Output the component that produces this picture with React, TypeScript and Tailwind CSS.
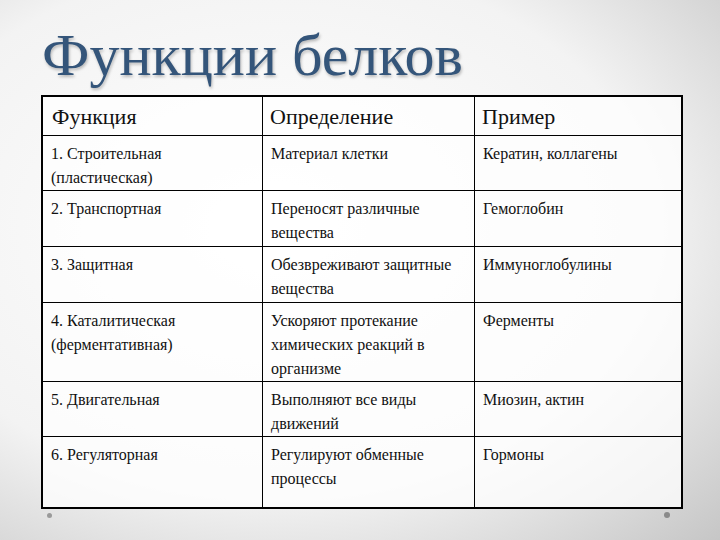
const SERIF = { fontFamily: "'Liberation Serif', 'Times New Roman', serif" };

const ROWS = [
  {
    fn: "1. Строительная (пластическая)",
    def: "Материал клетки",
    ex: "Кератин, коллагены",
    h: "h-[55px]",
  },
  {
    fn: "2. Транспортная",
    def: "Переносят различные вещества",
    ex: "Гемоглобин",
    h: "h-[56px]",
  },
  {
    fn: "3. Защитная",
    def: "Обезвреживают защитные вещества",
    ex: "Иммуноглобулины",
    h: "h-[56px]",
  },
  {
    fn: "4. Каталитическая (ферментативная)",
    def: "Ускоряют протекание химических реакций в организме",
    ex: "Ферменты",
    h: "h-[79px]",
  },
  {
    fn: "5. Двигательная",
    def: "Выполняют все виды движений",
    ex: "Миозин, актин",
    h: "h-[55px]",
  },
  {
    fn: "6. Регуляторная",
    def: "Регулируют обменные процессы",
    ex: "Гормоны",
    h: "h-[70px]",
  },
];

function Cell({ children, last }: { children: React.ReactNode; last?: boolean }) {
  return (
    <div
      style={SERIF}
      className={
        last
          ? "px-[8px] pt-[6px] text-[16px] leading-[24px] text-[#111]"
          : "border-r border-black px-[8px] pt-[6px] text-[16px] leading-[24px] text-[#111]"
      }
    >
      {children}
    </div>
  );
}

export default function App() {
  return (
    <div
      style={SERIF}
      className="relative h-[540px] w-[720px] overflow-hidden bg-radial-[ellipse_at_38%_42%] from-white via-[#f3f3f3] via-60% to-[#c6c6c6]"
    >
      <h1
        style={SERIF}
        className="pl-[42px] pt-[20px] text-[60px] leading-[70px] text-[#34557a] [text-shadow:1px_2px_3px_#00000040]"
      >
        Функции белков
      </h1>

      <div className="relative ml-[41px] mt-[5px] w-[642px] border-2 border-black bg-white/75">
        <div className="grid h-[39px] grid-cols-[220px_212px_1fr] border-b border-black text-[22px] leading-[28px] text-[#111]">
          <div style={SERIF} className="border-r border-black px-[9px] pt-[6px]">
            Функция
          </div>
          <div style={SERIF} className="border-r border-black px-[7px] pt-[6px]">
            Определение
          </div>
          <div style={SERIF} className="px-[7px] pt-[6px]">
            Пример
          </div>
        </div>
        {ROWS.map((r, i) => (
          <div
            key={r.fn}
            className={
              i < ROWS.length - 1
                ? `grid grid-cols-[220px_212px_1fr] border-b border-black ${r.h}`
                : `grid grid-cols-[220px_212px_1fr] ${r.h}`
            }
          >
            <Cell>{r.fn}</Cell>
            <Cell>{r.def}</Cell>
            <Cell last>{r.ex}</Cell>
          </div>
        ))}
        <span className="absolute -bottom-[11px] left-[4px] h-[5px] w-[5px] rounded-full bg-[#9a9a9a]" />
        <span className="absolute -bottom-[11px] right-[11px] h-[6px] w-[6px] rounded-full bg-[#8a8a8a]" />
      </div>
    </div>
  );
}
